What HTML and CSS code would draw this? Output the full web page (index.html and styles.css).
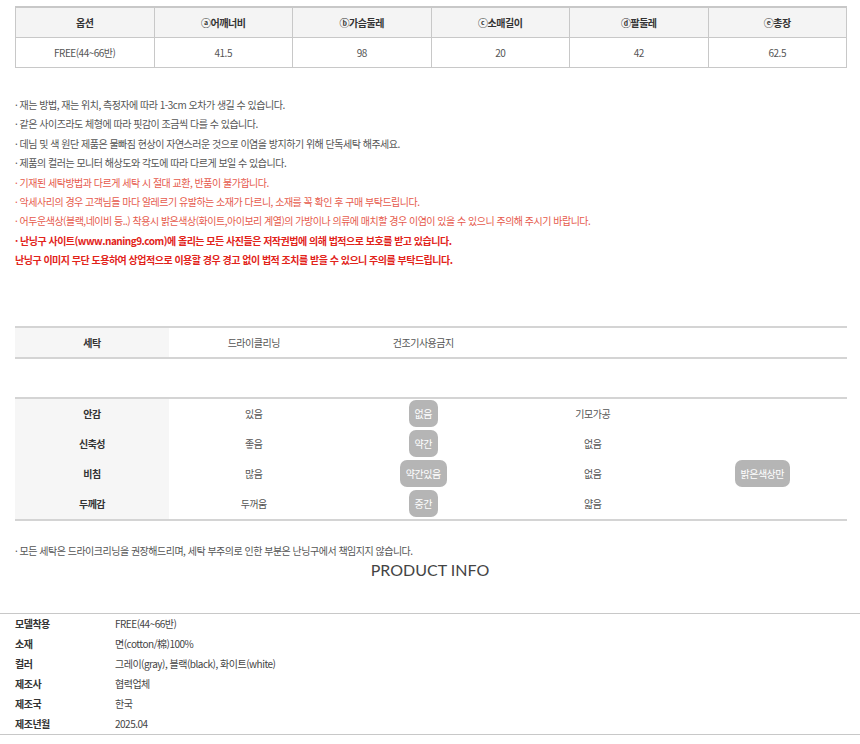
FILE: index.html
```html
<!DOCTYPE html>
<html lang="ko">
<head>
  <meta charset="UTF-8" />
  <meta name="viewport" content="width=device-width, initial-scale=1.0"/>
  <title>상품 상세 정보</title>
  <link rel="stylesheet" href="styles.css">
</head>
<body>
  <div class="wrap">
    <table class="size-table">
      <tr>
        <th>옵션</th>
        <th>ⓐ어깨너비</th>
        <th>ⓑ가슴둘레</th>
        <th>ⓒ소매길이</th>
        <th>ⓓ팔둘레</th>
        <th>ⓔ총장</th>
      </tr>
      <tr>
        <td>FREE(44~66반)</td>
        <td>41.5</td>
        <td>98</td>
        <td>20</td>
        <td>42</td>
        <td>62.5</td>
      </tr>
    </table>

    <ul class="notes">
      <li>· 재는 방법, 재는 위치, 측정자에 따라 1-3cm 오차가 생길 수 있습니다.</li>
      <li>· 같은 사이즈라도 체형에 따라 핏감이 조금씩 다를 수 있습니다.</li>
      <li>· 데님 및 색 원단 제품은 물빠짐 현상이 자연스러운 것으로 이염을 방지하기 위해 단독세탁 해주세요.</li>
      <li>· 제품의 컬러는 모니터 해상도와 각도에 따라 다르게 보일 수 있습니다.</li>
      <li class="warn">· 기재된 세탁방법과 다르게 세탁 시 절대 교환, 반품이 불가합니다.</li>
      <li class="warn">· 악세사리의 경우 고객님들 마다 알레르기 유발하는 소재가 다르니, 소재를 꼭 확인 후 구매 부탁드립니다.</li>
      <li class="warn">· 어두운색상(블랙,네이비 등..) 착용시 밝은색상(화이트,아이보리 계열)의 가방이나 의류에 매치할 경우 이염이 있을 수 있으니 주의해 주시기 바랍니다.</li>
      <li class="alert">· 난닝구 사이트(www.naning9.com)에 올리는 모든 사진들은 저작권법에 의해 법적으로 보호를 받고 있습니다.</li>
      <li class="alert">난닝구 이미지 무단 도용하여 상업적으로 이용할 경우 경고 없이 법적 조치를 받을 수 있으니 주의를 부탁드립니다.</li>
    </ul>

    <table class="spec-table care">
      <colgroup>
        <col class="col-head"><col><col><col><col>
      </colgroup>
      <tr>
        <th>세탁</th>
        <td>드라이클리닝</td>
        <td>건조기사용금지</td>
        <td></td>
        <td></td>
      </tr>
    </table>

    <table class="spec-table fabric">
      <colgroup>
        <col class="col-head"><col><col><col><col>
      </colgroup>
      <tr>
        <th>안감</th>
        <td>있음</td>
        <td><span class="badge">없음</span></td>
        <td>기모가공</td>
        <td></td>
      </tr>
      <tr>
        <th>신축성</th>
        <td>좋음</td>
        <td><span class="badge">약간</span></td>
        <td>없음</td>
        <td></td>
      </tr>
      <tr>
        <th>비침</th>
        <td>많음</td>
        <td><span class="badge">약간있음</span></td>
        <td>없음</td>
        <td><span class="badge">밝은색상만</span></td>
      </tr>
      <tr>
        <th>두께감</th>
        <td>두꺼움</td>
        <td><span class="badge">중간</span></td>
        <td>얇음</td>
        <td></td>
      </tr>
    </table>

    <p class="care-note">· 모든 세탁은 드라이크리닝을 권장해드리며, 세탁 부주의로 인한 부분은 난닝구에서 책임지지 않습니다.</p>
  </div>

  <h2 class="info-title">PRODUCT INFO</h2>

  <table class="info-table">
    <tr><th>모델착용</th><td>FREE(44~66반)</td></tr>
    <tr><th>소재</th><td>면(cotton/棉)100%</td></tr>
    <tr><th>컬러</th><td>그레이(gray), 블랙(black), 화이트(white)</td></tr>
    <tr><th>제조사</th><td>협력업체</td></tr>
    <tr><th>제조국</th><td>한국</td></tr>
    <tr><th>제조년월</th><td>2025.04</td></tr>
  </table>
</body>
</html>
```

FILE: styles.css
```css
body {
  margin: 0;
  padding: 0;
  background: #fff;
  color: #555;
  font-family: "Noto Sans CJK KR", "Noto Sans", sans-serif;
  font-size: 10px;
  letter-spacing: -0.5px;
}

.wrap {
  padding: 6px 13px 0 15px;
}

table {
  border-collapse: collapse;
  width: 100%;
  table-layout: fixed;
}

.size-table {
  border: 1px solid #c8c8c8;
  border-top-width: 2px;
}

.size-table th,
.size-table td {
  border: 1px solid #c8c8c8;
  height: 29px;
  padding: 0;
  text-align: center;
}

.size-table th {
  background: #f4f4f4;
  color: #333;
  font-weight: bold;
}

.size-table td {
  color: #555;
}

.notes {
  list-style: none;
  margin: 27px 0 0;
  padding: 0;
  line-height: 19.4px;
}

.notes .warn {
  color: #e65a4c;
}

.notes .alert {
  color: #e2231a;
  font-weight: bold;
}

.spec-table {
  border-top: 2px solid #d4d4d4;
  border-bottom: 2px solid #d4d4d4;
}

.spec-table .col-head {
  width: 154px;
}

.spec-table th,
.spec-table td {
  padding: 0;
  text-align: center;
  vertical-align: middle;
}

.spec-table th {
  background: #f6f6f6;
  color: #333;
  font-weight: bold;
}

.care {
  margin-top: 56px;
}

.care th,
.care td {
  height: 29px;
}

.fabric {
  margin-top: 38px;
}

.fabric th,
.fabric td {
  height: 30px;
}

.badge {
  display: inline-block;
  vertical-align: middle;
  padding: 0 6px;
  line-height: 27px;
  border-radius: 7px;
  background: #b5b5b5;
  color: #fff;
}

.care-note {
  margin: 20px 0 0;
  line-height: 19px;
}

.info-title {
  margin: 0;
  text-align: center;
  font-family: Lato, "Noto Sans", sans-serif;
  font-weight: normal;
  font-size: 16px;
  letter-spacing: 0;
  line-height: 20px;
  color: #444;
}

.info-table {
  margin-top: 33px;
  border-top: 1px solid #c8c8c8;
  border-bottom: 1px solid #c8c8c8;
}

.info-table th,
.info-table td {
  height: 20px;
  padding: 0;
  text-align: left;
  color: #444;
}

.info-table th {
  width: 100px;
  padding-left: 15px;
  font-weight: bold;
  color: #333;
}
```
